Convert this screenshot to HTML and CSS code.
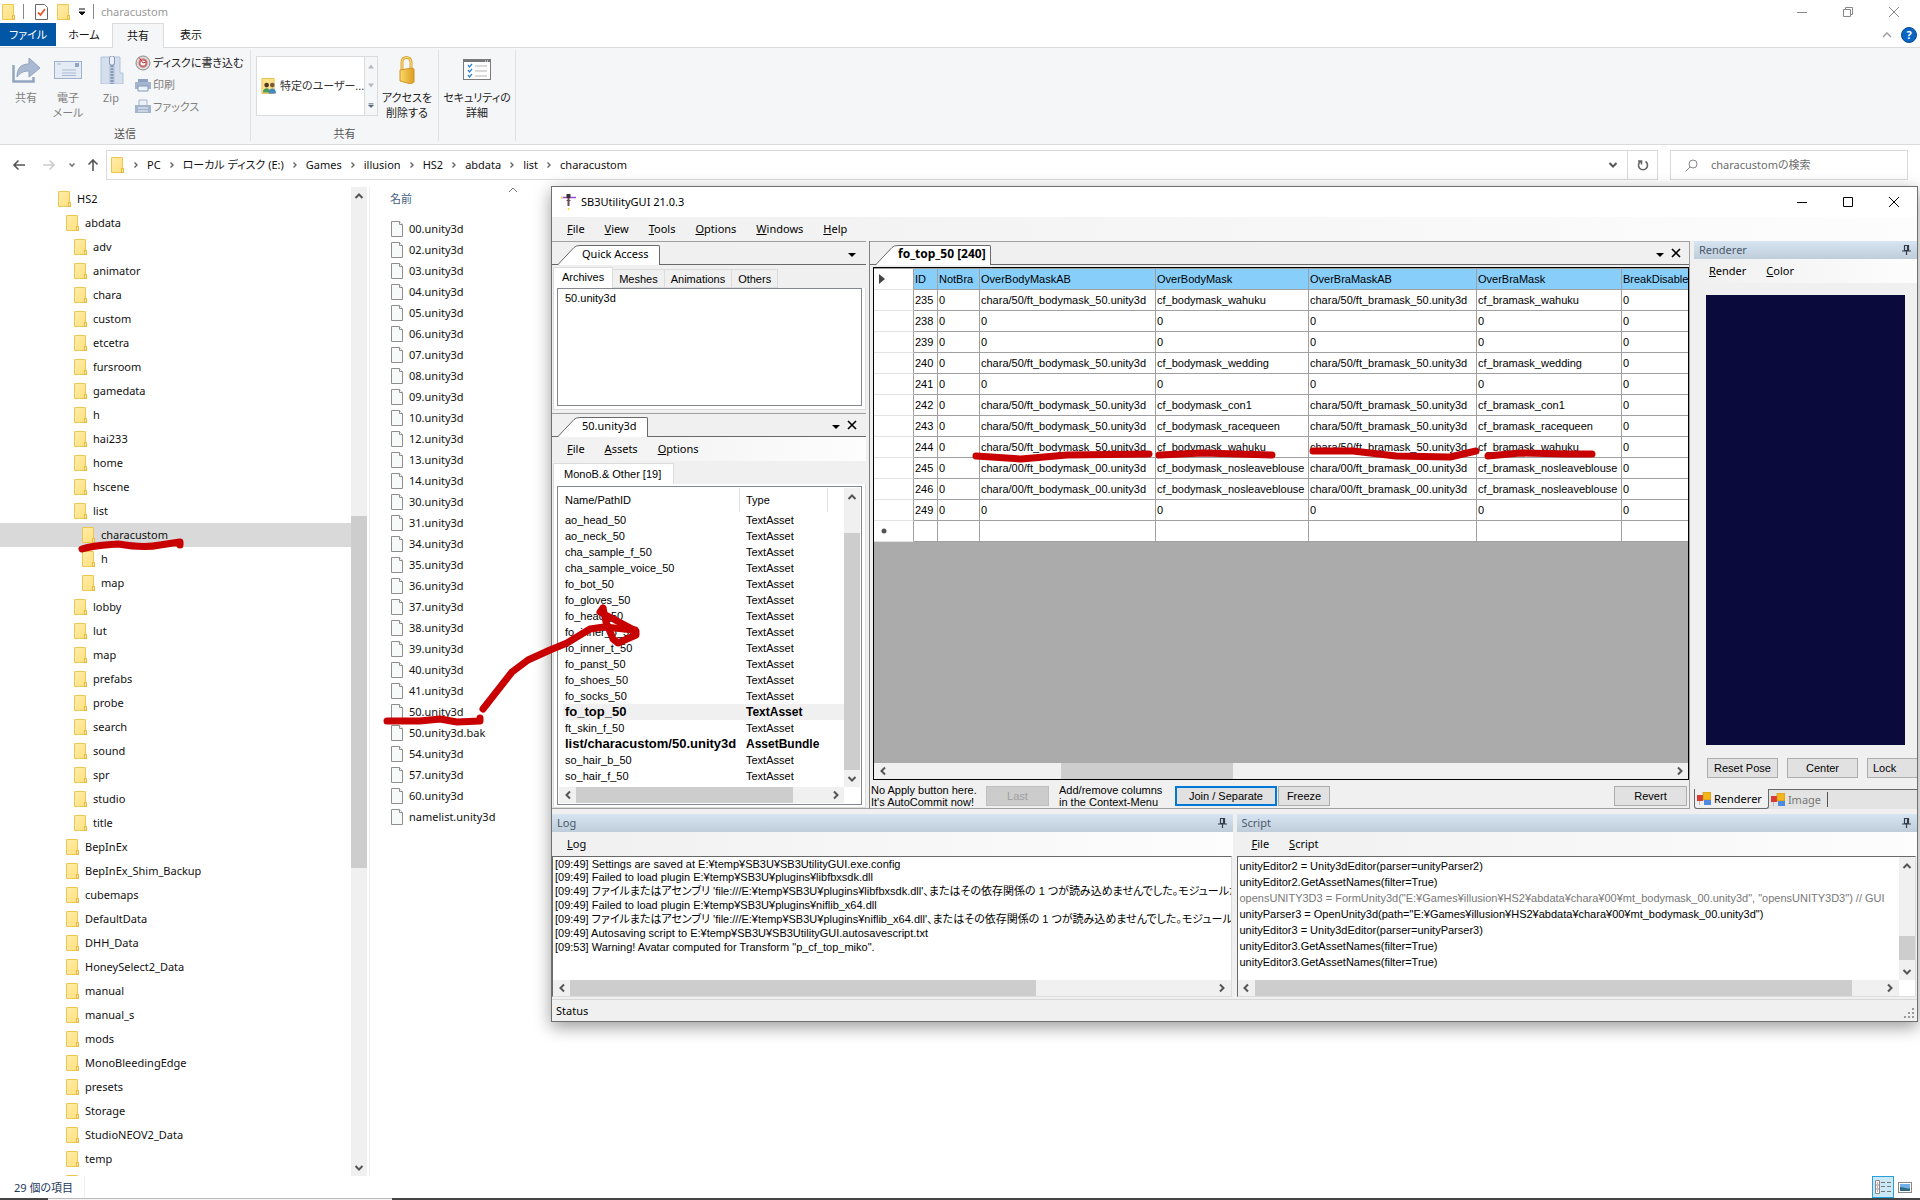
FILE: index.html
```html
<!DOCTYPE html>
<html lang="ja">
<head>
<meta charset="utf-8">
<title>characustom</title>
<link rel="stylesheet" href="styles.css">
</head>
<body>
<svg class="defs" aria-hidden="true">
  <defs>
    <linearGradient id="fg" x1="0" y1="0" x2="1" y2="1"><stop offset="0" stop-color="#ffecab"/><stop offset="1" stop-color="#ffe07d"/></linearGradient>
    <linearGradient id="lk" x1="0" y1="0" x2="1" y2="0"><stop offset="0" stop-color="#fbd86b"/><stop offset="1" stop-color="#dd9c1f"/></linearGradient>
  </defs>
  <symbol id="folder" viewBox="0 0 14 16"><path d="M.5.5h11v11h1v4H.5z" fill="url(#fg)" stroke="#ecc751"/><path d="M10.500 15.500V11.500h2v4z" fill="#ffe79c" stroke="#e3b93f"/></symbol>
  <symbol id="doc" viewBox="0 0 12 16"><path d="M.5.5h8l3 3v12H.5z" fill="#f8fafa" stroke="#8e8e8e"/><path d="M8.500.5v3h3" fill="#fff" stroke="#8e8e8e"/></symbol>
  <symbol id="up" viewBox="0 0 10 10"><path d="M1.500 7 5 3.500 8.500 7" fill="none" stroke="#555" stroke-width="2"/></symbol>
  <symbol id="down" viewBox="0 0 10 10"><path d="M1.500 3 5 6.500 8.500 3" fill="none" stroke="#555" stroke-width="2"/></symbol>
  <symbol id="left" viewBox="0 0 10 10"><path d="M7 1.500 3.500 5 7 8.500" fill="none" stroke="#555" stroke-width="2"/></symbol>
  <symbol id="right" viewBox="0 0 10 10"><path d="M3 1.500 6.500 5 3 8.500" fill="none" stroke="#555" stroke-width="2"/></symbol>
  <symbol id="crumb" viewBox="0 0 6 8"><path d="M1.500 1.500 4 4 1.500 6.500" fill="none" stroke="#666" stroke-width="1.400"/></symbol>
  <symbol id="slant" viewBox="0 0 22 20"><path d="M0 20 16 2.500Q18 .5 22 .5V20z" fill="#fff"/><path d="M0 19.500 16 2.500Q18 .5 22 .5" fill="none" stroke="#696969"/></symbol>
  <symbol id="drop" viewBox="0 0 10 6"><path d="M1 1h8L5 5z" fill="#000"/></symbol>
  <symbol id="cross" viewBox="0 0 10 10"><path d="M1 1l8 8M9 1 1 9" stroke="#000" stroke-width="1.600"/></symbol>
  <symbol id="pin" viewBox="0 0 9 12"><path d="M2.500 1.500h4v5h-4zM0 7h9M4.500 7v4M5.500 2v4" fill="none" stroke="#333d49" stroke-width="1.200"/></symbol>
  <symbol id="form" viewBox="0 0 14 14"><path d="M2.500 7v6" stroke="#bbb"/><rect x="0" y="3" width="6" height="6" fill="#d93a32"/><rect x="6" y="0" width="8" height="8" fill="#f2b61c" stroke="#b98a19" stroke-width=".6"/><rect x="7" y="8" width="7" height="5" fill="#4d8ae0"/></symbol>
</svg>

<div class="explorer">
  <header class="titlebar">
    <svg class="fold"><use href="#folder"/></svg><span class="bar"></span>
    <svg class="check" viewBox="0 0 13 16"><path d="M.5.5h9l3 3v12H.5z" fill="#fff" stroke="#666"/><path d="M3 8.500 5.500 11 10 5" fill="none" stroke="#e2592c" stroke-width="1.800"/></svg>
    <svg class="fold"><use href="#folder"/></svg>
    <svg class="qat" viewBox="0 0 8 8"><path d="M1 1h6M1 4h6L4 7z" stroke="#111" fill="#111"/></svg><span class="bar last"></span>
    <h1>characustom</h1>
    <div class="caption"><button aria-label="最小化"><svg viewBox="0 0 10 10"><path d="M0 5.500h10"/></svg></button><button aria-label="元に戻す"><svg viewBox="0 0 10 10"><path d="M.5 2.500h7v7h-7zM2.500 2.500v-2h7v7h-2"/></svg></button><button aria-label="閉じる"><svg viewBox="0 0 10 10"><path d="M0 0l10 10M10 0 0 10"/></svg></button></div>
  </header>
  <nav class="tabs">
    <button class="file">ファイル</button><button class="home">ホーム</button><button class="on">共有</button><button class="view">表示</button>
    <div class="help"><svg class="fold-up" viewBox="0 0 10 6"><path d="M1 5 5 1l4 4" fill="none" stroke="#999" stroke-width="1.300"/></svg><button class="q" aria-label="ヘルプ">?</button></div>
  </nav>
  <section class="ribbon">
    <div class="group send">
      <div class="tools">
        <button class="big off share"><svg viewBox="0 0 28 28"><path d="M1.500 9v16.500h20V21" fill="none" stroke="#92a5c0" stroke-width="2.500"/><path d="M5 21C5 12 9 8 17 8V2l11 10-11 9v-6c-6 0-9 2-12 6z" fill="#a9b9d2" stroke="#8fa2be"/></svg>共有</button>
        <button class="big off mail"><svg viewBox="0 0 28 28"><rect x=".5" y="5.500" width="27" height="17" fill="#e4ebf5" stroke="#9fb1cc"/><path d="M8 14h14M8 17h14M8 19.500h14M3 8h4" stroke="#a9b9d2"/><path d="M21 7h4v4h-4z" fill="#8fa5c8"/></svg>電子<br>メール</button>
        <button class="big off zip"><svg viewBox="0 0 28 28"><path d="M4 1h19v16h3v11H4z" fill="#d4deed" stroke="#b4c4dc"/><path d="M12 1h6v27h-6z" fill="#c0cce0"/><path d="M15 3v25" stroke="#8799b8" stroke-width="3" stroke-dasharray="2 1"/><rect x="12.500" y="0" width="5" height="9" rx="2" fill="#edf1f7" stroke="#8799b8"/></svg>Zip</button>
        <div class="small">
          <button class="live"><svg viewBox="0 0 16 16"><circle cx="8" cy="8" r="7" fill="#dcdcdc" stroke="#8a8a8a"/><circle cx="8" cy="8" r="3.500" fill="#fff" stroke="#c66" stroke-width="2"/><path d="M4 2.500l4 5.500 3-1" stroke="#c23a3a" fill="none"/></svg>ディスクに書き込む</button>
          <button class="off"><svg viewBox="0 0 16 16"><path d="M3 2h10v3H3z" fill="#8da2c0"/><path d="M0 5h16v7H0z" fill="#a3b4cd"/><path d="M3 9h10v5H3z" fill="#eef3fa" stroke="#8299bb"/></svg>印刷</button>
          <button class="off"><svg viewBox="0 0 16 16"><path d="M4 1h8v6H4z" fill="#edf2f9" stroke="#a6b6cd"/><path d="M0 6h16v8H0z" fill="#a3b4cd"/><path d="M3 9h10M3 12h10" stroke="#edf2f9"/></svg>ファックス</button>
        </div>
      </div>
      <h2>送信</h2>
    </div>
    <div class="group access">
      <div class="tools">
        <div class="gallery">
          <button class="who"><svg viewBox="0 0 16 16"><path d="M1 0h13v16H1z" fill="#ffe28a" stroke="#e6bf49"/><circle cx="6" cy="7" r="2.500" fill="#4b3a26"/><path d="M2 15c0-6 8-6 8 0z" fill="#4c9a62"/><circle cx="12" cy="7" r="2.500" fill="#7b5a3a"/><path d="M8 16c0-7 8-7 8 0z" fill="#4488bb"/></svg>特定のユーザー...</button>
          <div class="spin"><svg viewBox="0 0 6 4"><path d="M0 4l3-4 3 4z" fill="#b3b9c2"/></svg><svg viewBox="0 0 6 4"><path d="M0 0l3 4 3-4z" fill="#b3b9c2"/></svg><svg viewBox="0 0 6 6"><path d="M0 .5h6M0 2.500l3 3 3-3z" fill="#51647c" stroke="#51647c" stroke-width=".8"/></svg></div>
        </div>
        <button class="big live lock"><svg viewBox="0 0 28 28"><path d="M9 14V6c0-6 9-6 9 0v8" fill="none" stroke="#dba637" stroke-width="3"/><path d="M9 14V6c0-6 9-6 9 0v8" fill="none" stroke="#fbe08a"/><path d="M7 14 19 12l2 1v13l-3 2-11-3z" fill="url(#lk)" stroke="#cf9426"/></svg>アクセスを<br>削除する</button>
      </div>
      <h2>共有</h2>
    </div>
    <div class="group sec">
      <button class="big live"><svg viewBox="0 0 28 28"><rect x=".5" y="3.500" width="27" height="20" fill="#fff" stroke="#7b7b7b"/><path d="M1 5h26" stroke="#777" stroke-width="2"/><path d="M22 5h4" stroke="#fff" stroke-dasharray="1 1"/><path d="M5 9l1.500 2L9 8M5 14l1.500 2L9 13M5 19l1.500 2L9 18" fill="none" stroke="#2f86d0" stroke-width="1.300"/><path d="M12 10h12M12 15h12M12 20h12" stroke="#b5b5b5"/></svg>セキュリティの<br>詳細</button>
    </div>
  </section>
  <div class="address">
    <div class="arrows">
      <svg viewBox="0 0 14 12"><path d="M13 6H2M6.500 1.500 2 6l4.500 4.500" fill="none" stroke="#555" stroke-width="1.600"/></svg>
      <svg class="fwd" viewBox="0 0 14 12"><path d="M1 6h11M7.500 1.500 12 6l-4.500 4.500" fill="none" stroke="#ccc" stroke-width="1.600"/></svg>
      <svg class="s" viewBox="0 0 8 8"><path d="M1.500 2.500 4 5l2.500-2.500" fill="none" stroke="#777" stroke-width="1.600"/></svg>
      <svg viewBox="0 0 14 12"><path d="M7 12V1M2.500 5.500 7 1l4.500 4.500" fill="none" stroke="#555" stroke-width="1.600"/></svg>
    </div>
    <div class="path">
      <svg class="fold"><use href="#folder"/></svg>
      <svg class="cr"><use href="#crumb"/></svg><a href="#pc">PC</a>
      <svg class="cr"><use href="#crumb"/></svg><a href="#e">ローカル ディスク (E:)</a>
      <svg class="cr"><use href="#crumb"/></svg><a href="#games">Games</a>
      <svg class="cr"><use href="#crumb"/></svg><a href="#illusion">illusion</a>
      <svg class="cr"><use href="#crumb"/></svg><a href="#hs2">HS2</a>
      <svg class="cr"><use href="#crumb"/></svg><a href="#abdata">abdata</a>
      <svg class="cr"><use href="#crumb"/></svg><a href="#list">list</a>
      <svg class="cr"><use href="#crumb"/></svg><a href="#characustom">characustom</a>
      <button class="hist" aria-label="履歴"><svg class="ar"><use href="#down"/></svg></button>
      <button class="reload" aria-label="更新"><svg viewBox="0 0 12 12"><path d="M3.500 2.500A4.500 4.500 0 1 0 8.500 2.500M1 2h3.500v3.500" fill="none" stroke="#666" stroke-width="1.600"/></svg></button>
    </div>
    <label class="search"><svg viewBox="0 0 13 13"><circle cx="8" cy="5" r="4" fill="none" stroke="#888"/><path d="M5 8 .5 12.500" stroke="#888"/></svg><input type="search" placeholder="characustomの検索" aria-label="characustomの検索"></label>
  </div>
  <div class="body">
    <nav class="tree">
      <a class="l0" href="#t"><svg><use href="#folder"/></svg>HS2</a>
      <a class="l1" href="#t"><svg><use href="#folder"/></svg>abdata</a>
      <a class="l2" href="#t"><svg><use href="#folder"/></svg>adv</a>
      <a class="l2" href="#t"><svg><use href="#folder"/></svg>animator</a>
      <a class="l2" href="#t"><svg><use href="#folder"/></svg>chara</a>
      <a class="l2" href="#t"><svg><use href="#folder"/></svg>custom</a>
      <a class="l2" href="#t"><svg><use href="#folder"/></svg>etcetra</a>
      <a class="l2" href="#t"><svg><use href="#folder"/></svg>fursroom</a>
      <a class="l2" href="#t"><svg><use href="#folder"/></svg>gamedata</a>
      <a class="l2" href="#t"><svg><use href="#folder"/></svg>h</a>
      <a class="l2" href="#t"><svg><use href="#folder"/></svg>hai233</a>
      <a class="l2" href="#t"><svg><use href="#folder"/></svg>home</a>
      <a class="l2" href="#t"><svg><use href="#folder"/></svg>hscene</a>
      <a class="l2" href="#t"><svg><use href="#folder"/></svg>list</a>
      <a class="l3 sel" href="#t"><svg><use href="#folder"/></svg>characustom</a>
      <a class="l3" href="#t"><svg><use href="#folder"/></svg>h</a>
      <a class="l3" href="#t"><svg><use href="#folder"/></svg>map</a>
      <a class="l2" href="#t"><svg><use href="#folder"/></svg>lobby</a>
      <a class="l2" href="#t"><svg><use href="#folder"/></svg>lut</a>
      <a class="l2" href="#t"><svg><use href="#folder"/></svg>map</a>
      <a class="l2" href="#t"><svg><use href="#folder"/></svg>prefabs</a>
      <a class="l2" href="#t"><svg><use href="#folder"/></svg>probe</a>
      <a class="l2" href="#t"><svg><use href="#folder"/></svg>search</a>
      <a class="l2" href="#t"><svg><use href="#folder"/></svg>sound</a>
      <a class="l2" href="#t"><svg><use href="#folder"/></svg>spr</a>
      <a class="l2" href="#t"><svg><use href="#folder"/></svg>studio</a>
      <a class="l2" href="#t"><svg><use href="#folder"/></svg>title</a>
      <a class="l1" href="#t"><svg><use href="#folder"/></svg>BepInEx</a>
      <a class="l1" href="#t"><svg><use href="#folder"/></svg>BepInEx_Shim_Backup</a>
      <a class="l1" href="#t"><svg><use href="#folder"/></svg>cubemaps</a>
      <a class="l1" href="#t"><svg><use href="#folder"/></svg>DefaultData</a>
      <a class="l1" href="#t"><svg><use href="#folder"/></svg>DHH_Data</a>
      <a class="l1" href="#t"><svg><use href="#folder"/></svg>HoneySelect2_Data</a>
      <a class="l1" href="#t"><svg><use href="#folder"/></svg>manual</a>
      <a class="l1" href="#t"><svg><use href="#folder"/></svg>manual_s</a>
      <a class="l1" href="#t"><svg><use href="#folder"/></svg>mods</a>
      <a class="l1" href="#t"><svg><use href="#folder"/></svg>MonoBleedingEdge</a>
      <a class="l1" href="#t"><svg><use href="#folder"/></svg>presets</a>
      <a class="l1" href="#t"><svg><use href="#folder"/></svg>Storage</a>
      <a class="l1" href="#t"><svg><use href="#folder"/></svg>StudioNEOV2_Data</a>
      <a class="l1" href="#t"><svg><use href="#folder"/></svg>temp</a>
      <a class="l1" href="#t" aria-label="userdata"><svg><use href="#folder"/></svg></a>
    </nav>
    <div class="sb v nav"><svg><use href="#up"/></svg><i></i><svg><use href="#down"/></svg></div>
    <main class="files">
      <div class="head"><span>名前</span><svg viewBox="0 0 10 6"><path d="M1 5 5 1l4 4" fill="none" stroke="#777"/></svg></div>
      <a href="#f"><svg><use href="#doc"/></svg>00.unity3d</a>
      <a href="#f"><svg><use href="#doc"/></svg>02.unity3d</a>
      <a href="#f"><svg><use href="#doc"/></svg>03.unity3d</a>
      <a href="#f"><svg><use href="#doc"/></svg>04.unity3d</a>
      <a href="#f"><svg><use href="#doc"/></svg>05.unity3d</a>
      <a href="#f"><svg><use href="#doc"/></svg>06.unity3d</a>
      <a href="#f"><svg><use href="#doc"/></svg>07.unity3d</a>
      <a href="#f"><svg><use href="#doc"/></svg>08.unity3d</a>
      <a href="#f"><svg><use href="#doc"/></svg>09.unity3d</a>
      <a href="#f"><svg><use href="#doc"/></svg>10.unity3d</a>
      <a href="#f"><svg><use href="#doc"/></svg>12.unity3d</a>
      <a href="#f"><svg><use href="#doc"/></svg>13.unity3d</a>
      <a href="#f"><svg><use href="#doc"/></svg>14.unity3d</a>
      <a href="#f"><svg><use href="#doc"/></svg>30.unity3d</a>
      <a href="#f"><svg><use href="#doc"/></svg>31.unity3d</a>
      <a href="#f"><svg><use href="#doc"/></svg>34.unity3d</a>
      <a href="#f"><svg><use href="#doc"/></svg>35.unity3d</a>
      <a href="#f"><svg><use href="#doc"/></svg>36.unity3d</a>
      <a href="#f"><svg><use href="#doc"/></svg>37.unity3d</a>
      <a href="#f"><svg><use href="#doc"/></svg>38.unity3d</a>
      <a href="#f"><svg><use href="#doc"/></svg>39.unity3d</a>
      <a href="#f"><svg><use href="#doc"/></svg>40.unity3d</a>
      <a href="#f"><svg><use href="#doc"/></svg>41.unity3d</a>
      <a href="#f"><svg><use href="#doc"/></svg>50.unity3d</a>
      <a href="#f"><svg><use href="#doc"/></svg>50.unity3d.bak</a>
      <a href="#f"><svg><use href="#doc"/></svg>54.unity3d</a>
      <a href="#f"><svg><use href="#doc"/></svg>57.unity3d</a>
      <a href="#f"><svg><use href="#doc"/></svg>60.unity3d</a>
      <a href="#f"><svg><use href="#doc"/></svg>namelist.unity3d</a>
    </main>
  </div>
  <footer class="estatus"><span>29 個の項目</span>
    <div class="modes"><button class="det" aria-label="詳細"><svg viewBox="0 0 17 14"><path d="M.5.5h4v13h-4zM.5 5h4M.5 9h4" fill="#fff" stroke="#888"/><path d="M2 3h1M2 7h1M2 11h1" stroke="#c33"/><path d="M6 2.500h11M6 6.500h11M6 11.500h11" stroke="#777" stroke-dasharray="4 2"/></svg></button><button class="thumb" aria-label="大アイコン"><svg viewBox="0 0 14 11"><rect x=".5" y=".5" width="13" height="10" fill="#fff" stroke="#888"/><path d="M2 2h10v4H2z" fill="#6fb1e8"/><path d="M2 5c4 0 6 2 10 1v3H2z" fill="#2f6a86"/></svg></button></div>
  </footer>
  <div class="edge"><i></i></div>
</div>

<div class="win">
  <header class="wtitle"><svg class="app" viewBox="0 0 15 16"><path d="M0 3.500h15" stroke="#9a4be0" stroke-width="1.500"/><path d="M0 3.500h2" stroke="#f1e23a" stroke-width="1.500"/><path d="M7.500 0v4" stroke="#333" stroke-width="4"/><path d="M7.500 4v8" stroke="#6b4a50" stroke-width="2"/><path d="M5.500 6.500h4" stroke="#6b4a50"/><path d="M7.500 14v2" stroke="#e6e02c" stroke-width="1.500"/></svg><h2>SB3UtilityGUI 21.0.3</h2>
    <div class="caption dark"><button aria-label="Minimize"><svg viewBox="0 0 10 10"><path d="M0 5.500h10"/></svg></button><button aria-label="Maximize"><svg viewBox="0 0 10 10"><path d="M.5.5h9v9h-9z"/></svg></button><button aria-label="Close"><svg viewBox="0 0 10 10"><path d="M0 0l10 10M10 0 0 10"/></svg></button></div>
  </header>
  <nav class="menu"><button><u>F</u>ile</button><button><u>V</u>iew</button><button><u>T</u>ools</button><button><u>O</u>ptions</button><button><u>W</u>indows</button><button><u>H</u>elp</button></nav>
  <div class="docks">
    <section class="left">
      <div class="strip"><svg class="sl"><use href="#slant"/></svg><button class="doctab">Quick Access</button><span class="sp"></span><svg class="dr"><use href="#drop"/></svg></div>
      <div class="ptabs"><button class="on">Archives</button><button>Meshes</button><button>Animations</button><button>Others</button></div>
      <div class="page arch"><div class="box">50.unity3d</div></div>
      <div class="strip two"><svg class="sl"><use href="#slant"/></svg><button class="doctab">50.unity3d</button><span class="sp"></span><svg class="dr"><use href="#drop"/></svg><svg class="cx"><use href="#cross"/></svg></div>
      <nav class="menu"><button><u>F</u>ile</button><button><u>A</u>ssets</button><button><u>O</u>ptions</button></nav>
      <div class="ptabs mono"><button class="on">MonoB.&amp; Other [19]</button></div>
      <div class="page assets"><div class="box lv">
        <table>
          <colgroup><col class="n"><col class="t"><col></colgroup>
          <thead><tr><th>Name/PathID</th><th>Type</th><th></th></tr></thead>
          <tbody>
          <tr><td>ao_head_50</td><td colspan="2">TextAsset</td></tr>
          <tr><td>ao_neck_50</td><td colspan="2">TextAsset</td></tr>
          <tr><td>cha_sample_f_50</td><td colspan="2">TextAsset</td></tr>
          <tr><td>cha_sample_voice_50</td><td colspan="2">TextAsset</td></tr>
          <tr><td>fo_bot_50</td><td colspan="2">TextAsset</td></tr>
          <tr><td>fo_gloves_50</td><td colspan="2">TextAsset</td></tr>
          <tr><td>fo_head_50</td><td colspan="2">TextAsset</td></tr>
          <tr><td>fo_inner_b_50</td><td colspan="2">TextAsset</td></tr>
          <tr><td>fo_inner_t_50</td><td colspan="2">TextAsset</td></tr>
          <tr><td>fo_panst_50</td><td colspan="2">TextAsset</td></tr>
          <tr><td>fo_shoes_50</td><td colspan="2">TextAsset</td></tr>
          <tr><td>fo_socks_50</td><td colspan="2">TextAsset</td></tr>
          <tr class="b sel"><td>fo_top_50</td><td colspan="2">TextAsset</td></tr>
          <tr><td>ft_skin_f_50</td><td colspan="2">TextAsset</td></tr>
          <tr class="b"><td>list/characustom/50.unity3d</td><td colspan="2">AssetBundle</td></tr>
          <tr><td>so_hair_b_50</td><td colspan="2">TextAsset</td></tr>
          <tr><td>so_hair_f_50</td><td colspan="2">TextAsset</td></tr>
          </tbody>
        </table>
        <div class="sb v lvv"><svg><use href="#up"/></svg><i></i><svg><use href="#down"/></svg></div>
        <div class="sb h lvh"><svg><use href="#left"/></svg><i></i><svg><use href="#right"/></svg></div>
      </div></div>
    </section>
    <section class="center">
      <div class="strip"><svg class="sl"><use href="#slant"/></svg><button class="doctab bold">fo_top_50 [240]</button><span class="sp"></span><svg class="dr"><use href="#drop"/></svg><svg class="cx"><use href="#cross"/></svg></div>
      <div class="grid">
        <div class="cells">
        <table>
          <colgroup><col class="c0"><col class="c1"><col class="c2"><col class="c3"><col class="c4"><col class="c5"><col class="c6"><col class="c7"></colgroup>
          <tr class="hd"><td><svg class="cur" viewBox="0 0 6 10"><path d="M0 0l6 5-6 5z" fill="#444"/></svg></td><th>ID</th><th>NotBra</th><th>OverBodyMaskAB</th><th>OverBodyMask</th><th>OverBraMaskAB</th><th>OverBraMask</th><th>BreakDisableMask</th></tr>
          <tr><td></td><td>235</td><td>0</td><td>chara/50/ft_bodymask_50.unity3d</td><td>cf_bodymask_wahuku</td><td>chara/50/ft_bramask_50.unity3d</td><td>cf_bramask_wahuku</td><td>0</td></tr>
          <tr><td></td><td>238</td><td>0</td><td>0</td><td>0</td><td>0</td><td>0</td><td>0</td></tr>
          <tr><td></td><td>239</td><td>0</td><td>0</td><td>0</td><td>0</td><td>0</td><td>0</td></tr>
          <tr><td></td><td>240</td><td>0</td><td>chara/50/ft_bodymask_50.unity3d</td><td>cf_bodymask_wedding</td><td>chara/50/ft_bramask_50.unity3d</td><td>cf_bramask_wedding</td><td>0</td></tr>
          <tr><td></td><td>241</td><td>0</td><td>0</td><td>0</td><td>0</td><td>0</td><td>0</td></tr>
          <tr><td></td><td>242</td><td>0</td><td>chara/50/ft_bodymask_50.unity3d</td><td>cf_bodymask_con1</td><td>chara/50/ft_bramask_50.unity3d</td><td>cf_bramask_con1</td><td>0</td></tr>
          <tr><td></td><td>243</td><td>0</td><td>chara/50/ft_bodymask_50.unity3d</td><td>cf_bodymask_racequeen</td><td>chara/50/ft_bramask_50.unity3d</td><td>cf_bramask_racequeen</td><td>0</td></tr>
          <tr><td></td><td>244</td><td>0</td><td>chara/50/ft_bodymask_50.unity3d</td><td>cf_bodymask_wahuku</td><td>chara/50/ft_bramask_50.unity3d</td><td>cf_bramask_wahuku</td><td>0</td></tr>
          <tr><td></td><td>245</td><td>0</td><td>chara/00/ft_bodymask_00.unity3d</td><td>cf_bodymask_nosleaveblouse</td><td>chara/00/ft_bramask_00.unity3d</td><td>cf_bramask_nosleaveblouse</td><td>0</td></tr>
          <tr><td></td><td>246</td><td>0</td><td>chara/00/ft_bodymask_00.unity3d</td><td>cf_bodymask_nosleaveblouse</td><td>chara/00/ft_bramask_00.unity3d</td><td>cf_bramask_nosleaveblouse</td><td>0</td></tr>
          <tr><td></td><td>249</td><td>0</td><td>0</td><td>0</td><td>0</td><td>0</td><td>0</td></tr>
          <tr><td><svg class="new" viewBox="0 0 6 6"><circle cx="3" cy="3" r="2.500" fill="#555"/></svg></td><td></td><td></td><td></td><td></td><td></td><td></td><td></td></tr>
        </table>
        </div>
        <div class="sb h gh"><svg><use href="#left"/></svg><i></i><svg><use href="#right"/></svg></div>
      </div>
      <div class="acts"><p>No Apply button here.<br>It's AutoCommit now!</p><button class="btn last" disabled>Last</button><p class="ctx">Add/remove columns<br>in the Context-Menu</p><button class="btn join">Join / Separate</button><button class="btn freeze">Freeze</button><span class="sp"></span><button class="btn revert">Revert</button></div>
    </section>
    <section class="render">
      <div class="cap"><span>Renderer</span><svg><use href="#pin"/></svg></div>
      <nav class="menu"><button><u>R</u>ender</button><button><u>C</u>olor</button></nav>
      <div class="canvas"></div>
      <div class="pose"><button class="btn">Reset Pose</button><button class="btn">Center</button><button class="btn lockb">Lock</button></div>
      <div class="rtabs"><button class="on"><svg><use href="#form"/></svg>Renderer</button><button><svg><use href="#form"/></svg>Image</button></div>
    </section>
  </div>
  <div class="bottom">
    <section class="log">
      <div class="cap"><span>Log</span><svg><use href="#pin"/></svg></div>
      <nav class="menu"><button><u>L</u>og</button></nav>
      <div class="text">
        <div class="lines">
          <p class="tight">[09:49] Settings are saved at E:¥temp¥SB3U¥SB3UtilityGUI.exe.config</p>
          <p class="tight">[09:49] Failed to load plugin E:¥temp¥SB3U¥plugins¥libfbxsdk.dll</p>
          <p>[09:49] ファイルまたはアセンブリ 'file:///E:¥temp¥SB3U¥plugins¥libfbxsdk.dll'、またはその依存関係の 1 つが読み込めませんでした。モジュールが</p>
          <p>[09:49] Failed to load plugin E:¥temp¥SB3U¥plugins¥niflib_x64.dll</p>
          <p>[09:49] ファイルまたはアセンブリ 'file:///E:¥temp¥SB3U¥plugins¥niflib_x64.dll'、またはその依存関係の 1 つが読み込めませんでした。モジュール</p>
          <p>[09:49] Autosaving script to E:¥temp¥SB3U¥SB3UtilityGUI.autosavescript.txt</p>
          <p>[09:53] Warning! Avatar computed for Transform "p_cf_top_miko".</p>
        </div>
        <div class="sb h logh"><svg><use href="#left"/></svg><i></i><svg><use href="#right"/></svg></div>
      </div>
    </section>
    <section class="script">
      <div class="cap"><span>Script</span><svg><use href="#pin"/></svg></div>
      <nav class="menu"><button><u>F</u>ile</button><button><u>S</u>cript</button></nav>
      <div class="text">
        <div class="lines">
          <p>unityEditor2 = Unity3dEditor(parser=unityParser2)</p>
          <p>unityEditor2.GetAssetNames(filter=True)</p>
          <p class="dim">opensUNITY3D3 = FormUnity3d("E:¥Games¥illusion¥HS2¥abdata¥chara¥00¥mt_bodymask_00.unity3d", "opensUNITY3D3") // GUI</p>
          <p>unityParser3 = OpenUnity3d(path="E:¥Games¥illusion¥HS2¥abdata¥chara¥00¥mt_bodymask_00.unity3d")</p>
          <p>unityEditor3 = Unity3dEditor(parser=unityParser3)</p>
          <p>unityEditor3.GetAssetNames(filter=True)</p>
          <p>unityEditor3.GetAssetNames(filter=True)</p>
        </div>
        <div class="sb v scv"><svg><use href="#up"/></svg><i></i><svg><use href="#down"/></svg></div>
        <div class="sb h sch"><svg><use href="#left"/></svg><i></i><svg><use href="#right"/></svg></div>
      </div>
    </section>
  </div>
  <footer class="wstatus"><span>Status</span><svg viewBox="0 0 11 11"><path d="M8 0h2v2H8zM4 4h2v2H4zM8 4h2v2H8zM0 8h2v2H0zM4 8h2v2H4zM8 8h2v2H8z" fill="#999"/></svg></footer>
</div>

<svg class="ink" width="1920" height="1200" aria-hidden="true">
  <path d="M82 549C95 545 106 545 118 544C130 546 146 548 160 545L180 542V545"/>
  <path d="M387 721H420L440 719 457 722 480 721V718"/>
  <path d="M483 709 512 672 528 660 550 650 567 643 590 629 604 627 635 630"/>
  <path d="M603 608 600 612 636 631V635L618 643 613 639 606 622 603 608"/>
  <path d="M976 456 1021 459 1067 455 1149 454"/>
  <path d="M1159 455 1203 453 1272 455"/>
  <path d="M1313 451H1353L1396 456 1450 457 1476 451"/>
  <path d="M1488 456 1520 453 1567 454H1592"/>
</svg>
</body>
</html>
```
FILE: styles.css
```css
* { box-sizing: border-box; }
body { margin: 0; height: 100vh; position: relative; overflow: hidden; background: #fff; color: #111; font: 11px/14px "Noto Sans", "Noto Sans CJK JP", sans-serif; font-feature-settings: "palt"; }
button { font: inherit; font-feature-settings: inherit; color: inherit; background: none; border: 0; padding: 0; margin: 0; white-space: nowrap; }
a { color: inherit; text-decoration: none; }
h1, h2, p { margin: 0; font: inherit; }
svg { flex: none; display: block; }
.defs { position: absolute; width: 0; height: 0; }
.fold { width: 14px; height: 16px; }
.sp { flex: 1; }
table { border-spacing: 0; table-layout: fixed; }
th { font-weight: inherit; text-align: left; }

/* explorer frame */
.explorer { height: 100%; display: flex; flex-direction: column; }
.titlebar { height: 23px; flex: none; display: flex; align-items: center; padding: 0 3px 0 2px; color: #999; font-size: 11px; }
.bar { width: 1px; height: 15px; background: #888; margin: 0 11px 0 7px; }
.bar.last { margin: 0 7px 0 7px; }
.check { width: 13px; height: 16px; margin-right: 9px; }
.qat { width: 8px; height: 8px; margin-left: 7px; }
.caption { margin-left: auto; display: flex; align-self: stretch; }
.caption button { width: 46px; display: flex; justify-content: center; align-items: center; }
.caption svg { width: 10px; height: 10px; fill: none; stroke: #888; overflow: visible; }
.caption.dark svg { stroke: #000; }
.tabs { height: 25px; flex: none; display: flex; border-bottom: 1px solid #dadbdc; }
.tabs button { text-align: center; }
.tabs .file { width: 56px; height: 23px; background: #0156a6; color: #fff; }
.tabs .home { width: 56px; }
.tabs .on { width: 52px; height: 25px; background: #f5f6f7; border: 1px solid #dadbdc; border-bottom: 0; }
.tabs .view { width: 54px; }
.tabs .help { margin-left: auto; display: flex; align-items: center; gap: 9px; padding-right: 3px; }
.fold-up { width: 10px; height: 6px; }
.tabs .q { width: 16px; height: 16px; border-radius: 8px; background: #0a66c2; color: #fff; font-weight: bold; border: 1px solid #084a8f; line-height: 14px; }
.ribbon { height: 97px; flex: none; display: flex; background: #f5f6f7; border-bottom: 1px solid #dadbdc; padding: 2px 0 3px; }
.group { border-right: 1px solid #e1e2e4; display: flex; flex-direction: column; justify-content: space-between; color: #333; }
.group h2 { text-align: center; line-height: 14px; color: #555; }
.send { width: 251px; } .access { width: 188px; } .sec { width: 77px; }
.tools { display: flex; }
.big { display: flex; flex-direction: column; align-items: center; padding-top: 6px; line-height: 15px; text-align: center; }
.big svg { width: 28px; height: 28px; margin-bottom: 6px; }
.off { color: #808080; }
.live { color: #222; }
.share { width: 42px; margin-left: 5px; } .mail { width: 42px; } .zip { width: 44px; }
.small { display: flex; flex-direction: column; padding-top: 2px; margin-left: 2px; }
.small button { height: 22px; display: flex; align-items: center; gap: 2px; }
.small svg { width: 16px; height: 16px; }
.gallery { width: 122px; height: 60px; margin: 6px 0 0 5px; border: 1px solid #dadbdc; background: #fff; display: flex; }
.who { flex: 1; display: flex; align-items: center; gap: 4px; padding-left: 4px; }
.who svg { width: 15px; height: 16px; }
.spin { width: 14px; border-left: 1px solid #dadbdc; background: #f5f6f7; display: flex; flex-direction: column; justify-content: space-around; align-items: center; }
.spin svg { width: 6px; height: 5px; }
.lock { width: 58px; }
.address { height: 42px; flex: none; display: flex; padding: 5px 12px 7px 0; }
.arrows { width: 106px; display: flex; align-items: center; padding-left: 12px; }
.arrows svg { width: 14px; height: 12px; margin-right: 16px; }
.arrows .fwd { margin-right: 12px; }
.arrows .s { width: 8px; height: 8px; margin-right: 10px; }
.arrows svg:last-child { margin: 0; }
.path { flex: 1; border: 1px solid #d9d9d9; display: flex; align-items: center; padding-left: 4px; font-size: 11px; }
.cr { width: 6px; height: 8px; margin: 0 8px; }
.path a { white-space: nowrap; }
.hist { margin-left: auto; width: 28px; display: flex; justify-content: center; }
.ar { width: 10px; height: 10px; }
.reload { width: 30px; height: 28px; border-left: 1px solid #d9d9d9; display: flex; align-items: center; justify-content: center; }
.reload svg { width: 12px; height: 12px; }
.search { width: 238px; margin-left: 12px; border: 1px solid #d9d9d9; display: flex; align-items: center; padding-left: 14px; gap: 13px; }
.search svg { width: 13px; height: 13px; }
.search input { font: inherit; border: 0; outline: 0; padding: 0; width: 180px; background: none; }
.search input::placeholder { color: #6d6d6d; opacity: 1; }
.body { flex: 1; min-height: 0; display: flex; }
.tree { width: 351px; overflow: hidden; }
.tree a { height: 24px; display: flex; align-items: center; gap: 5px; }
.tree svg { width: 14px; height: 16px; }
.tree .sel { background: #d9d9d9; }
.l0 { padding-left: 58px; } .l1 { padding-left: 66px; } .l2 { padding-left: 74px; } .l3 { padding-left: 82px; }
.files { flex: 1; overflow: hidden; margin-left: 2px; border-left: 1px solid #eee; padding-left: 20px; }
.files .head { height: 31px; display: flex; align-items: flex-start; color: #43607f; padding-top: 5px; }
.files .head svg { width: 10px; height: 6px; margin: -5px 0 0 96px; }
.files a { height: 21px; display: flex; align-items: center; gap: 6px; padding-left: 1px; }
.files a svg { width: 12px; height: 16px; }
.estatus { height: 22px; flex: none; display: flex; justify-content: space-between; color: #1e395b; padding-left: 14px; }
.estatus span { line-height: 24px; padding-right: 11px; border-right: 1px solid #eee; }
.modes { display: flex; padding-right: 8px; gap: 4px; }
.det { width: 22px; height: 22px; background: #cce8f6; border: 1px solid #26a0da; display: flex; align-items: center; justify-content: center; }
.det svg { width: 17px; height: 14px; }
.thumb { width: 14px; display: flex; align-items: center; }
.thumb svg { width: 14px; height: 11px; }
.edge { height: 2px; flex: none; background: #444; padding-left: 48px; }
.edge i { display: block; width: 344px; height: 2px; background: #f3f3f3; border-top: 1px solid #bbb; }

/* scroll bars: arrow, gap, thumb, gap, arrow */
.sb { background: #f0f0f0; display: grid; flex: none; }
.sb i { background: #cdcdcd; }
.sb svg { width: 10px; height: 10px; place-self: center; }
.sb.v { width: 16px; }
.sb.v svg:last-child { grid-row: 5; } .sb.v i { grid-row: 3; }
.sb.h { height: 16px; }
.sb.h svg:last-child { grid-column: 5; } .sb.h i { grid-column: 3; }
.nav { grid-template-rows: 17px 312fr 352fr 291fr 17px; }
.lvv { grid-template-rows: 17px 28fr 236fr 0fr 17px; }
.scv { grid-template-rows: 17px 62fr 24fr 3fr 17px; }
.lvh { grid-template-columns: 17px 0fr 217fr 34fr 17px; }
.gh { grid-template-columns: 17px 170fr 172fr 438fr 17px; }
.logh { grid-template-columns: 17px 0fr 466fr 177fr 17px; }
.sch { grid-template-columns: 17px 0fr 596fr 30fr 17px; }

/* SB3Utility window, floating over the explorer */
.win { position: absolute; left: 551px; right: 2px; top: 186px; bottom: 178px; border: 1px solid #707070; background: #f0f0f0; box-shadow: 0 5px 16px rgba(0,0,0,.4); display: flex; flex-direction: column; font-family: "Liberation Sans", "Noto Sans CJK JP", sans-serif; color: #000; }
.wtitle { height: 30px; flex: none; background: #fff; display: flex; align-items: center; padding: 0 0 1px 9px; font-family: "Noto Sans", sans-serif; }
.app { width: 15px; height: 16px; margin-right: 5px; }
.menu { height: 24px; flex: none; display: flex; align-items: center; gap: 20px; padding-left: 15px; background: linear-gradient(90deg, #f0f0f0, #fdfdfd); font-family: "Noto Sans", sans-serif; }
.docks { flex: 1; min-height: 0; display: flex; }
.left { width: 318px; flex: none; display: flex; flex-direction: column; border-right: 1px solid #808080; border-bottom: 1px solid #a0a0a0; }
.left > * { margin-right: 3px; }
.strip { height: 24px; flex: none; display: flex; align-items: center; border-top: 1px solid #a0a0a0; border-bottom: 1px solid #696969; padding: 0 9px 0 6px; font-family: "Noto Sans", sans-serif; }
.sl { width: 22px; height: 20px; align-self: flex-end; margin-bottom: -1px; }
.doctab { height: 20px; align-self: flex-end; margin-bottom: -1px; background: #fff; border: solid #696969; border-width: 1px 1px 0 0; border-radius: 0 2px 0 0; padding: 0 10px 3px 2px; }
.doctab.bold { font-weight: bold; font-size: 12px; padding-right: 4px; padding-left: 0; }
.dr { width: 10px; height: 6px; margin-top: 4px; }
.cx { width: 10px; height: 10px; margin-left: 6px; }
.two { margin-top: 3px; }
.ptabs { height: 23px; flex: none; display: flex; align-items: flex-end; padding-left: 1px; }
.ptabs button { height: 19px; border: 1px solid #dcdcdc; border-left: 0; padding: 0 6px; }
.ptabs .on { background: #fff; height: 21px; border: 1px solid #dcdcdc; border-bottom: 0; padding: 0 8px 2px; }
.mono .on { padding: 0 12px 0 10px; }
.page { border: 1px solid #dcdcdc; border-top: 0; background: #fff; padding: 0 3px 3px; margin-left: 1px; }
.arch { height: 122px; flex: none; }
.box { height: 100%; border: 1px solid #828790; background: #fff; padding: 2px 7px; }
.assets { flex: 1; min-height: 0; padding-top: 2px; padding-bottom: 2px; }
.lv { display: grid; grid-template: 1fr 16px / 1fr 16px; padding: 1px; overflow: hidden; }
.lv table { width: 100%; align-self: start; padding-left: 4px; }
.lv .n { width: 177px; } .lv .t { width: 88px; }
.lv th { height: 24px; padding: 0 6px 0 2px; border-right: 1px solid #e0e0e0; }
.lv th:nth-child(2) { padding-left: 6px; }
.lv th:last-child { border: 0; }
.lv td { height: 16px; line-height: 14px; padding: 0 0 0 2px; white-space: nowrap; }
.lv td + td { padding-left: 6px; }
.lv .b { font-weight: bold; font-size: 13px; }
.lv .b td + td { font-size: 12px; }
.lv .sel td { background: #f0f0f0; }

.center { flex: 1; min-width: 0; display: flex; flex-direction: column; border-right: 1px solid #a0a0a0; border-bottom: 1px solid #a0a0a0; }
.center .strip { padding-right: 8px; }
.grid { flex: 1; min-height: 0; margin: 2px 0 0 3px; border: 1px solid #000; background: #ababab; display: flex; flex-direction: column; }
.cells { flex: 1; min-height: 0; overflow: hidden; border-top: 1px solid #a0a0a0; }
.cells table { width: 848px; }
.c0 { width: 40px; } .c1 { width: 24px; } .c2 { width: 42px; } .c3 { width: 176px; } .c4 { width: 153px; } .c5 { width: 168px; } .c6 { width: 145px; } .c7 { width: 100px; }
.cells th, .cells td { height: 21px; background: #fff; border: solid #a0a0a0; border-width: 0 1px 1px 0; padding: 0 0 0 1px; line-height: 14px; white-space: nowrap; overflow: hidden; }
.cells th { background: #87cefa; }
.cells td:first-child { border-bottom-color: #e3e3e3; padding-left: 5px; }
.cur { width: 6px; height: 10px; }
.new { width: 6px; height: 6px; margin-left: 2px; }
.acts { height: 28px; flex: none; display: flex; align-items: center; padding: 3px 2px 0 1px; line-height: 12px; }
.acts p { width: 115px; white-space: nowrap; }
.acts .ctx { width: 126px; padding-left: 10px; }
.btn { height: 20px; background: #e1e1e1; border: 1px solid #adadad; }
.btn.last { width: 63px; background: #ccc; border-color: #bfbfbf; color: #a0a0a0; }
.join { width: 102px; border: 2px solid #0078d7; }
.freeze { width: 52px; margin-left: 1px; }
.revert { width: 73px; }

.render { width: 223px; flex: none; margin-left: 4px; display: flex; flex-direction: column; overflow: hidden; }
.cap { height: 18px; flex: none; display: flex; justify-content: space-between; align-items: center; padding: 0 6px 0 5px; background: linear-gradient(#d7e4f2, #bfcddb); color: #4a5868; font-family: "Noto Sans", sans-serif; }
.cap svg { width: 9px; height: 12px; }
.canvas { flex: 1; margin: 12px 12px 13px; background: #0a0a3c; }
.pose { display: flex; gap: 9px; margin-left: 13px; flex: none; }
.pose .btn { width: 71px; flex: none; }
.pose .lockb { text-align: left; padding-left: 5px; }
.rtabs { height: 20px; flex: none; margin-top: 11px; display: flex; border-top: 1px solid #696969; background: #e3e3e3; font-family: "Noto Sans", sans-serif; color: #777; }
.rtabs button { display: flex; align-items: center; gap: 3px; padding: 0 6px 0 2px; margin: 2px 0; border-right: 1px solid #555; }
.rtabs .on { background: #f0f0f0; color: #000; border: 1px solid #696969; border-top: 0; border-radius: 0 0 3px 3px; margin: -1px 0 0; }
.rtabs svg { width: 14px; height: 14px; }

.bottom { height: 185px; flex: none; display: flex; gap: 4px; margin-top: 5px; }
.log, .script { flex: 1; min-width: 0; display: flex; flex-direction: column; }
.text { flex: 1; min-height: 0; margin: 0 1px 2px 0; background: #fff; border: 1px solid #696969; border-right-color: #ddd; border-bottom-color: #ddd; display: grid; grid-template: 1fr 16px / minmax(0, 1fr); }
.script .text { grid-template-columns: minmax(0, 1fr) 16px; }
.lines { overflow: hidden; padding: 1px 2px; white-space: nowrap; }
.log .lines p { line-height: 14px; }
.log .lines .tight { line-height: 13px; }
.script .lines p { line-height: 16px; }
.lines .dim { color: #777; }
.wstatus { height: 22px; flex: none; border-top: 1px solid #d7d7d7; display: flex; justify-content: space-between; align-items: center; padding: 0 2px 0 4px; font-family: "Noto Sans", sans-serif; }
.wstatus svg { width: 11px; height: 11px; align-self: flex-end; margin-bottom: 2px; }

/* freehand red marks */
.ink { position: absolute; left: 0; top: 0; pointer-events: none; fill: none; stroke: #c80000; stroke-width: 7; stroke-linecap: round; stroke-linejoin: round; }
```
